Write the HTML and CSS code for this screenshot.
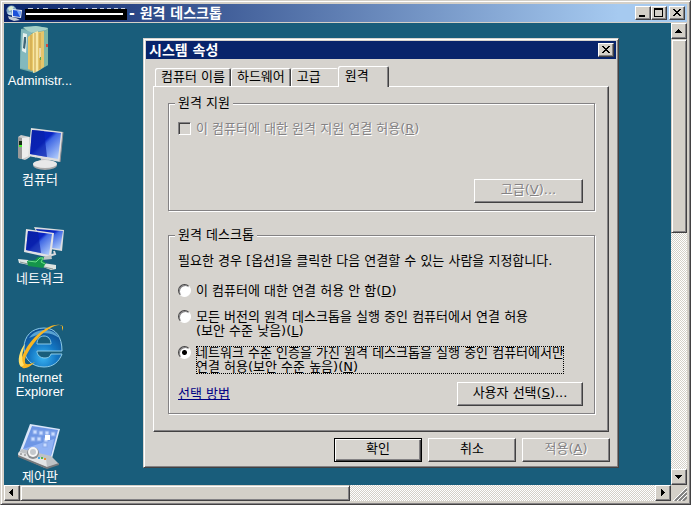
FILE: index.html
```html
<!DOCTYPE html>
<html lang="ko">
<head>
  <meta charset="UTF-8">
  <meta name="viewport" content="width=device-width, initial-scale=1.0">
  <title>원격 데스크톱</title>
  <link rel="stylesheet" href="styles.css">
</head>

<body>
  <div class="window">
    <!-- 창 제목 -->
    <header class="title-bar">
      <svg class="title-icon" viewBox="0 0 16 16" aria-hidden="true">
        <circle cx="5.5" cy="5.5" r="5" fill="#7fa6c4"/>
        <path d="M2 3 L5 1 L8 2 L6 5 L3 6Z" fill="#d8e8d0"/>
        <path d="M1 8 L5 7 L6 10 L3 10Z" fill="#b8d4e8"/>
        <path d="M6 4 L16 5 L15 13 L6 12Z" fill="#e8eef4"/>
        <path d="M7 5 L15 6 L14 12 L7 11Z" fill="#1c50d8"/>
        <path d="M11 6 L15 6 L14 12Z" fill="#7aa8f8"/>
        <path d="M2 11 L10 13 L14 15 L8 16 L3 14Z" fill="#c4ccd4"/>
      </svg>
      <svg class="masked" viewBox="0 0 102 14" aria-hidden="true">
        <path d="M3 2.5h5M12 2.5h2M18 2.5h5M33 2.5h2M38 2.5h5M48 2.5h2M61 2.5h2M67 2.5h5M75 2.5h4M82 2.5h4M89 2.5h4M96 2.5h4" stroke="#c8d0e0" stroke-width="1"/>
        <rect y="3" width="102" height="11" fill="#000"/>
        <rect x="1" y="7" width="97" height="2" fill="#fff"/>
      </svg>
      <h1>- 원격 데스크톱</h1>
      <div class="controls">
        <button type="button" class="box-btn" aria-label="최소화">
          <svg viewBox="0 0 12 10"><rect x="2" y="7" width="6" height="2"/></svg>
        </button>
        <button type="button" class="box-btn" aria-label="최대화">
          <svg viewBox="0 0 12 10"><path d="M1 0h9v9H1zM2 2v6h7V2z" fill-rule="evenodd"/></svg>
        </button>
        <button type="button" class="box-btn close" aria-label="닫기">
          <svg viewBox="0 0 12 10"><path d="M2 1h2v1h1v1h2v-1h1v-1h2v1h-1v1h-1v1h-1v1h1v1h1v1h1v1h-2v-1h-1v-1h-2v1h-1v1h-2v-1h1v-1h1v-1h1v-1h-1v-1h-1v-1h-1z"/></svg>
        </button>
      </div>
    </header>

    <div class="client">
      <main class="desktop">
        <!-- 바탕 화면 아이콘 -->
        <ul class="icons">
          <li>
            <svg viewBox="0 0 48 48" aria-hidden="true">
              <path d="M5 4 L20 1 L32 3 V40 L19 48 L4 44Z" fill="#6fa9a6"/>
              <path d="M7 2 L20 1 L32 3 L30 5 L14 8Z" fill="#a4cfc6"/>
              <path d="M5 4 L15 7 L13 45 L4 43Z" fill="#84b9bd"/>
              <path d="M7 8 L11 9 L10 28 L6 26Z" fill="#e6f0ee"/>
              <path d="M8 12 L10 12 L10 17 L9 24 L7 23Z" fill="#406878"/>
              <path d="M12 12 L17 8 V46 L12 44Z" fill="#e9c868"/>
              <path d="M17 8 L22 6 V46 L17 48Z" fill="#f7e6a3"/>
              <path d="M22 7 L28 6 V42 L22 46Z" fill="#e5c56b"/>
              <path d="M15 10V46M19 8V47M24 8V44" stroke="#c59d47" stroke-width="1"/>
              <path d="M28 7 L32 4 V40 L28 42Z" fill="#7cb6a5"/>
              <path d="M24 23V33" stroke="#fff" stroke-width="1"/>
              <rect x="30" y="19" width="2" height="3" fill="#d34b3f"/>
              <rect x="24" y="32" width="1" height="3" fill="#52ad50"/>
            </svg>
            <span>Administr...</span>
          </li>
          <li>
            <svg viewBox="0 0 48 48" aria-hidden="true">
              <defs>
                <linearGradient id="screen" x1="0" x2="1" y1="0" y2="1">
                  <stop offset="0" stop-color="#0924a8"/>
                  <stop offset=".42" stop-color="#0a25c4"/>
                  <stop offset=".5" stop-color="#4068e4"/>
                  <stop offset="1" stop-color="#c3dcff"/>
                </linearGradient>
              </defs>
              <path d="M2 13 L5 11 L14 13 V33 L9 36 L2 34Z" fill="#c9cbcc"/>
              <path d="M2 13 L6 14 V35 L2 34Z" fill="#999"/>
              <path d="M6 14 L13 13 V32 L6 35Z" fill="#ededed"/>
              <rect x="3" y="17" width="3" height="5" fill="#172b17"/>
              <rect x="3" y="21" width="3" height="2" fill="#45ef2f"/>
              <path d="M10 35 L15 31 L20 33" fill="none" stroke="#d8d8d8" stroke-width="1"/>
              <path d="M24 32 L33 33 L32 40 H26Z" fill="#c2c2c6"/>
              <ellipse cx="29" cy="41" rx="12" ry="5" fill="#aaa"/>
              <ellipse cx="29" cy="40" rx="12" ry="4" fill="#e8e8e8"/>
              <path d="M15 4 L47 8 L44 38 L12 32Z" fill="#dfdfdf"/>
              <path d="M16 6 L45 9 L42 35 L14 30Z" fill="url(#screen)"/>
              <path d="M16 6 L28 7 L31 33 L14 30Z" fill="#0821ac" opacity=".7"/>
              <path d="M47 8 L44 38" stroke="#8c8c92" stroke-width="1"/>
            </svg>
            <span>컴퓨터</span>
          </li>
          <li>
            <svg viewBox="0 0 48 48" aria-hidden="true">
              <path d="M18 4 L48 7 L46 28 L28 25Z" fill="#dcdde0"/>
              <path d="M20 6 L47 8 L44 26 L28 24Z" fill="url(#screen)"/>
              <path d="M38 28 L39 31 L30 34" fill="none" stroke="#d8d8dc" stroke-width="2"/>
              <path d="M10 6 L38 10 L35 35 L8 29Z" fill="#e1e1e4"/>
              <path d="M12 8 L36 11 L33 32 L10 27Z" fill="url(#screen)"/>
              <path d="M12 8 L22 9 L25 30 L10 27Z" fill="#081fa5" opacity=".7"/>
              <path d="M23 35 L35 32 L36 36 L26 37Z" fill="#bfc5c6"/>
              <path d="M2 36 L12 37 L13 42 L3 40Z" fill="#e0e7e5"/>
              <path d="M27 40 L40 42 L40 46 L35 47 L27 44Z" fill="#dce3e1"/>
              <path d="M4 39L12 41M28 44L37 46" stroke="#899895" stroke-width="1"/>
              <path d="M11 38 L19 37 L22 34 H28 L27 38 L30 40 L27 45 L12 43Z" fill="#15954a"/>
              <path d="M12 38 L20 39 L24 35 H27 L25 39 L29 41" fill="none" stroke="#6bde87" stroke-width="1"/>
            </svg>
            <span>네트워크</span>
          </li>
          <li>
            <svg viewBox="0 0 48 48" aria-hidden="true">
              <defs>
                <radialGradient id="globe" cx=".5" cy=".75" r=".7">
                  <stop offset="0" stop-color="#3ab4f2"/>
                  <stop offset=".5" stop-color="#1478c4"/>
                  <stop offset="1" stop-color="#0d4f94"/>
                </radialGradient>
              </defs>
              <path d="M46 29 H21 C21 33 24 36 29 36 C32 36 34 35 35 32 H46 C43 40 37 45 28 45 C16 45 8 37 8 26 C8 14 16 6 28 6 C40 6 46 15 46 29Z M21 22 H35 C35 17 32 14 28 14 C24 14 21 17 21 22Z" fill="url(#globe)" stroke="#8ccbe8" stroke-width="1" fill-rule="evenodd"/>
              <path d="M13 16 C17 10 23 8 29 8 C36 8 41 11 43 16 C37 11 28 10 21 13Z" fill="#8bd7f6" opacity=".6"/>
              <path d="M46 9 C48 5 47 3 44 3 C34 1 18 13 10 27 C4 37 3 44 7 46 C10 47 15 44 19 40 C13 43 9 43 9 40 C8 35 15 24 24 14 C33 6 42 1 46 4Z" fill="#f8b522"/>
              <path d="M5 45 C0 40 4 27 9 22 C6 31 5 38 8 43Z" fill="#ffe169"/>
            </svg>
            <span>Internet<br>Explorer</span>
          </li>
          <li>
            <svg viewBox="0 0 48 48" aria-hidden="true">
              <path d="M14 3 L44 8 L35 41 L3 32Z" fill="#dbe7fa"/>
              <path d="M16 5 L42 9 L35 35 L7 28Z" fill="#6e96e5"/>
              <path d="M7 28 L38 18 L34 38Z" fill="#92b3f5"/>
              <g fill="#c9dcff" stroke="#89a9ea" stroke-width="1">
                <rect x="17" y="9" width="4" height="4"/><rect x="23" y="10" width="4" height="4"/>
                <rect x="15" y="16" width="4" height="4"/><rect x="21" y="16" width="4" height="4"/>
                <rect x="29" y="10" width="4" height="4"/><rect x="35" y="11" width="4" height="4"/>
                <rect x="28" y="17" width="4" height="4"/><rect x="27" y="22" width="4" height="4"/>
              </g>
              <rect x="29" y="14" width="5" height="5" fill="#fff"/>
              <path d="M2 32 L6 28 L35 35 L43 43 L29 47 L2 35Z" fill="#bfc2c5"/>
              <path d="M3 31 L30 38 L31 46 L2 35Z" fill="#e3e4e5"/>
              <path d="M31 46 L43 42 V44 L31 48 L2 36 V34Z" fill="#77797c"/>
              <circle cx="17" cy="32" r="6" fill="#8b8e91"/>
              <circle cx="17" cy="31" r="5" fill="#f6f6f6"/>
              <circle cx="17" cy="31" r="3" fill="#c4c8cc"/>
              <rect x="22" y="36" width="2" height="2" fill="#41a9e7"/>
              <rect x="25" y="36" width="2" height="2" fill="#55b845"/>
              <rect x="28" y="37" width="2" height="2" fill="#e99134"/>
              <path d="M4 33h2M8 34h2" stroke="#777" stroke-width="1"/>
            </svg>
            <span>제어판</span>
          </li>
        </ul>

        <!-- 시스템 속성 대화 상자 -->
        <form class="dialog">
          <header class="dialog-title">
            <h2>시스템 속성</h2>
            <button type="button" class="box-btn" aria-label="닫기">
              <svg viewBox="0 0 12 10"><path d="M2 1h2v1h1v1h2v-1h1v-1h2v1h-1v1h-1v1h-1v1h1v1h1v1h1v1h-2v-1h-1v-1h-2v1h-1v1h-2v-1h1v-1h1v-1h1v-1h-1v-1h-1v-1h-1z"/></svg>
            </button>
          </header>

          <div class="dialog-body">
            <div class="tabs" role="tablist">
              <button type="button" role="tab" class="tab">컴퓨터 이름</button>
              <button type="button" role="tab" class="tab">하드웨어</button>
              <button type="button" role="tab" class="tab last">고급</button>
              <button type="button" role="tab" class="tab active" aria-selected="true">원격</button>
            </div>

            <div class="pane" role="tabpanel">
              <fieldset class="assist">
                <legend>원격 지원</legend>
                <div class="option disabled">
                  <input type="checkbox" id="assist" disabled>
                  <label for="assist">이 컴퓨터에 대한 원격 지원 연결 허용(<u>R</u>)</label>
                </div>
                <button type="button" class="btn advanced" disabled>고급(<u>V</u>)...</button>
              </fieldset>

              <fieldset class="remote">
                <legend>원격 데스크톱</legend>
                <p>필요한 경우 [옵션]을 클릭한 다음 연결할 수 있는 사람을 지정합니다.</p>
                <div class="option single">
                  <input type="radio" name="remote" id="deny">
                  <label for="deny">이 컴퓨터에 대한 연결 허용 안 함(<u>D</u>)</label>
                </div>
                <div class="option">
                  <input type="radio" name="remote" id="any">
                  <label for="any">모든 버전의 원격 데스크톱을 실행 중인 컴퓨터에서 연결 허용<br>(보안 수준 낮음)(<u>L</u>)</label>
                </div>
                <div class="option">
                  <input type="radio" name="remote" id="nla" checked>
                  <label for="nla" class="focused">네트워크 수준 인증을 가진 원격 데스크톱을 실행 중인 컴퓨터에서만<br>연결 허용(보안 수준 높음)(<u>N</u>)</label>
                </div>
                <div class="bottom-row">
                  <a href="#help">선택 방법</a>
                  <button type="button" class="btn users">사용자 선택(<u>S</u>)...</button>
                </div>
              </fieldset>
            </div>

            <div class="actions">
              <button type="submit" class="btn default">확인</button>
              <button type="button" class="btn">취소</button>
              <button type="button" class="btn" disabled>적용(<u>A</u>)</button>
            </div>
          </div>
        </form>
      </main>

      <!-- 스크롤 막대 -->
      <div class="scroll vertical">
        <button type="button" class="box-btn" aria-label="위로"><svg viewBox="0 0 12 12"><path d="M5 4h1v1h1v1h1v1h1v1H2V7h1V6h1V5h1z"/></svg></button>
        <div class="track"><div class="thumb"></div></div>
        <button type="button" class="box-btn" aria-label="아래로"><svg viewBox="0 0 12 12"><path d="M2 4h7v1H8v1H7v1H6v1H5V7H4V6H3V5H2z"/></svg></button>
      </div>
      <div class="scroll horizontal">
        <button type="button" class="box-btn" aria-label="왼쪽으로"><svg viewBox="0 0 12 12"><path d="M7 2v7H6V8H5V7H4V6H3V5h1V4h1V3h1V2z"/></svg></button>
        <div class="track"><div class="thumb"></div></div>
        <button type="button" class="box-btn" aria-label="오른쪽으로"><svg viewBox="0 0 12 12"><path d="M4 2h1v1h1v1h1v1h1v1H7v1H6v1H5v1H4z"/></svg></button>
      </div>
      <div class="grip">
        <svg viewBox="0 0 16 16" aria-hidden="true">
          <path d="M4 16L16 4M8 16L16 8M12 16L16 12" stroke="#808080" stroke-width="2"/>
          <path d="M2 16L16 2M6 16L16 6M10 16L16 10" stroke="#fff" stroke-width="1"/>
        </svg>
      </div>
    </div>
  </div>
</body>
</html>
```

FILE: styles.css
```css
:root {
  --face: #d6d3ce;
  --frame: #d4d0c8;
  --shadow: #848284;
  --dark: #424142;
  --navy: #08246b;
  --desktop: #195d7b;
}

* {
  box-sizing: border-box;
}

body {
  margin: 0;
  font-family: "DejaVu Sans", "Noto Sans CJK KR", sans-serif;
  font-size: 13px;
  line-height: 14px;
  color: #000;
}

button, input {
  margin: 0;
  font: inherit;
  color: inherit;
}

h1, h2 {
  margin: 0;
  font-size: 14px;
  font-weight: 700;
  line-height: 18px;
  color: #fff;
  white-space: nowrap;
}

/* 창 테두리 */
.window {
  display: flex;
  flex-direction: column;
  height: 100vh;
  padding: 3px;
  overflow: hidden;
  background: var(--frame);
  border: 1px solid;
  border-color: var(--frame) var(--dark) var(--dark) var(--frame);
  box-shadow: inset 1px 1px 0 #fff, inset -1px -1px 0 var(--shadow);
}

.title-bar {
  display: flex;
  align-items: center;
  flex: none;
  height: 18px;
  margin-bottom: 1px;
  padding: 0 2px;
  background: linear-gradient(90deg, #0a246a, #a6caf0 90%);
}

.title-icon {
  width: 16px;
  height: 16px;
}

.masked {
  width: 102px;
  height: 14px;
  margin: 0 2px 0 3px;
}

.controls {
  display: flex;
  margin-left: auto;
}

.box-btn {
  display: flex;
  align-items: center;
  justify-content: center;
  flex: none;
  width: 16px;
  height: 14px;
  padding: 0;
  background: var(--frame);
  border: 1px solid;
  border-color: #fff var(--dark) var(--dark) #fff;
  box-shadow: inset -1px -1px 0 var(--shadow);
}

.box-btn svg {
  width: 12px;
  height: 10px;
}

.box-btn.close {
  margin-left: 2px;
}

.client {
  display: grid;
  grid-template: minmax(0, 1fr) 16px / minmax(0, 1fr) 16px;
  flex: 1;
  min-height: 0;
}

.desktop {
  position: relative;
  overflow: hidden;
  background: var(--desktop);
}

/* 바탕 화면 아이콘 */
.icons {
  width: 72px;
  margin: 0;
  padding: 2px 0 0;
  list-style: none;
}

.icons li {
  display: flex;
  flex-direction: column;
  align-items: center;
  height: 99px;
  font-family: "Liberation Sans", "Noto Sans CJK KR", sans-serif;
  text-align: center;
  color: #fff;
}

.icons svg {
  width: 48px;
  height: 48px;
  margin-bottom: 1px;
}

/* 대화 상자 */
.dialog {
  position: absolute;
  top: 15px;
  left: 139px;
  width: 476px;
  padding: 2px;
  background: var(--face);
  border: 1px solid;
  border-color: var(--face) var(--dark) var(--dark) var(--face);
  box-shadow: inset 1px 1px 0 #fff, inset -1px -1px 0 var(--shadow);
}

.dialog-title {
  display: flex;
  align-items: center;
  justify-content: space-between;
  height: 18px;
  padding: 0 2px 0 3px;
  background: var(--navy);
}

.dialog-body {
  padding: 7px 7px 3px;
}

.tabs {
  display: flex;
  align-items: flex-end;
  height: 20px;
  padding-left: 2px;
}

.tab {
  height: 18px;
  min-width: 47px;
  padding: 0 6px;
  text-align: left;
  white-space: nowrap;
  background: var(--face);
  border: 0;
  border-radius: 2px 2px 0 0;
  box-shadow: inset 1px 1px 0 #fff, inset -1px 0 0 var(--dark), inset -2px 0 0 var(--shadow);
}

.tab.last {
  box-shadow: inset 1px 1px 0 #fff;
}

.tab.active {
  position: relative;
  height: 21px;
  min-width: 51px;
  margin-bottom: -1px;
  padding: 0 7px 1px;
}

.pane {
  padding: 9px 13px 17px 14px;
  border: 1px solid;
  border-color: #fff var(--dark) var(--dark) #fff;
  box-shadow: inset -1px -1px 0 var(--shadow);
}

fieldset {
  min-width: 0;
  margin: 0;
  padding: 12px 11px 7px 9px;
  border: 1px solid var(--shadow);
  box-shadow: inset 1px 1px 0 #fff, 1px 1px 0 #fff;
}

.assist {
  margin-bottom: 17px;
}

legend {
  margin-left: -3px;
  padding: 0 3px;
  background: var(--face);
}

p {
  margin: 0 0 16px;
  white-space: nowrap;
}

.option {
  display: flex;
  align-items: flex-start;
  gap: 5px;
  margin-bottom: 8px;
  white-space: nowrap;
}

.option.single {
  margin-bottom: 12px;
}

.option input {
  flex: none;
  width: 13px;
  height: 13px;
  appearance: none;
}

.option input[type="checkbox"] {
  background: var(--face);
  border: 1px solid;
  border-color: var(--shadow) #fff #fff var(--shadow);
  box-shadow: inset 1px 1px 0 var(--dark);
}

.option input[type="radio"] {
  background: #fff;
  border: 1px solid;
  border-color: var(--dark) #fff #fff var(--dark);
  border-radius: 50%;
  box-shadow: inset 1px 1px 0 var(--shadow);
}

.option input[type="radio"]:checked {
  background: radial-gradient(circle, #000 2px, #fff 3px);
}

.focused {
  outline: 1px dotted #000;
  outline-offset: -1px;
}

.disabled,
.btn:disabled {
  color: var(--shadow);
  text-shadow: 1px 1px 0 #fff;
}

.btn {
  width: 88px;
  height: 24px;
  padding: 0 0 2px;
  white-space: nowrap;
  background: var(--face);
  border: 1px solid;
  border-color: #fff var(--dark) var(--dark) #fff;
  box-shadow: inset -1px -1px 0 var(--shadow);
}

.btn.default {
  border-color: #000;
  box-shadow: inset 1px 1px 0 #fff, inset -1px -1px 0 var(--dark), inset -2px -2px 0 var(--shadow);
}

.btn.advanced {
  display: block;
  width: 109px;
  margin: 43px 0 0 auto;
}

.btn.users {
  width: 126px;
}

.bottom-row {
  display: flex;
  align-items: center;
  justify-content: space-between;
}

a {
  color: #000084;
}

.actions {
  display: flex;
  justify-content: flex-end;
  gap: 6px;
  margin: 6px -1px 0 0;
}

/* 스크롤 막대 */
.scroll {
  display: flex;
}

.vertical {
  flex-direction: column;
}

.scroll .box-btn {
  height: 16px;
}

.scroll .box-btn svg {
  height: 12px;
}

.track {
  display: flex;
  flex: 1;
  flex-direction: inherit;
  background: repeating-conic-gradient(#fff 0 25%, var(--frame) 0 50%) 0 0 / 2px 2px;
}

.thumb {
  background: var(--frame);
  border: 1px solid;
  border-color: var(--frame) var(--dark) var(--dark) var(--frame);
  box-shadow: inset 1px 1px 0 #fff, inset -1px -1px 0 var(--shadow);
}

.vertical .thumb {
  height: 45%;
}

.horizontal .thumb {
  width: 52%;
}

.grip svg {
  display: block;
  width: 16px;
  height: 16px;
}
```
